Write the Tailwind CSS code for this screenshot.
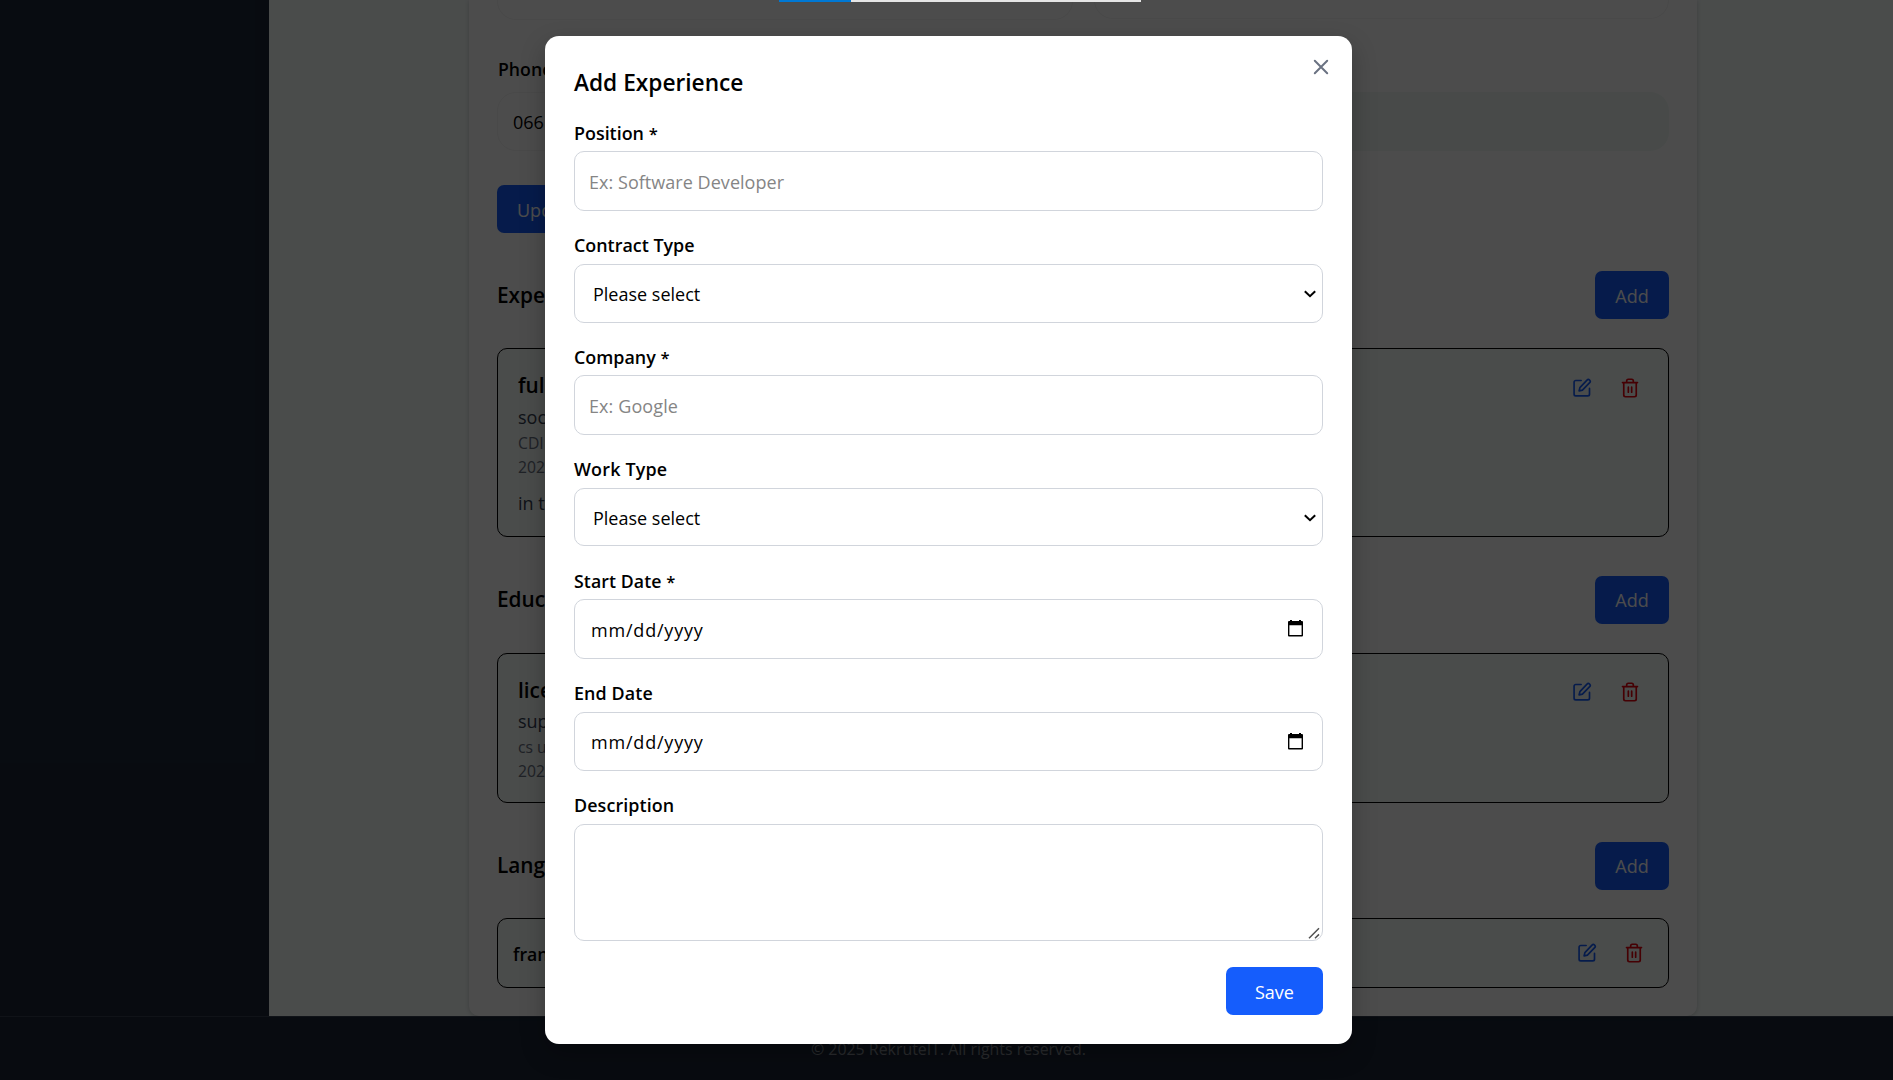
<!DOCTYPE html>
<html lang="en">
<head>
<meta charset="utf-8">
<title>Add Experience</title>
<script src="https://cdn.jsdelivr.net/npm/@tailwindcss/browser@4"></script>
</head>
<body class="h-[1080px] w-[1893px] overflow-hidden bg-white font-['Open_Sans','Noto_Sans',sans-serif] text-[18px] text-black">
<svg class="hidden">
  <symbol id="edit" viewBox="0 0 24 24" fill="none" stroke="currentColor" stroke-width="2" stroke-linecap="round" stroke-linejoin="round">
    <path d="M11 3H4.500a2 2 0 0 0-2 2v14.500a2 2 0 0 0 2 2H19a2 2 0 0 0 2-2v-7"/><path d="M18 2.600a2.121 2.121 0 0 1 3.200 3L12.500 14.500l-4 1 1-4z"/>
  </symbol>
  <symbol id="trash" viewBox="0 0 24 24" fill="none" stroke="currentColor" stroke-width="2" stroke-linecap="round" stroke-linejoin="round">
    <path d="M3 5.500h18M19.500 5.500V20.500a2 2 0 0 1-2 2h-11a2 2 0 0 1-2-2V5.500M8 5.500V3.500a2 2 0 0 1 2-2h4a2 2 0 0 1 2 2v2M10 11v6M14 11v6"/>
  </symbol>
  <symbol id="chev" viewBox="0 0 12 8" fill="none" stroke="currentColor" stroke-width="2"><path d="M.8 1.2 6 6.2l5.2-5"/></symbol>
  <symbol id="cal" viewBox="0 0 15 17"><path fill="currentColor" fill-rule="evenodd" d="M2 0h2v1h7V0h2v1h1a1 1 0 0 1 1 1v13.500a1 1 0 0 1-1 1H1a1 1 0 0 1-1-1V2a1 1 0 0 1 1-1h1zM1.400 5.300v9.700h12.200V5.300z"/></symbol>
</svg>

<!-- Page -->
<div class="flex h-[1016px]">
  <aside class="w-[269px] shrink-0 bg-[#1b2738]"></aside>
  <main class="flex-1 bg-[#f7fdfb] pl-[200px]">
    <section class="flex h-full w-[1228px] flex-col rounded-b-[10px] bg-white px-[28px] shadow-[0_1px_4px_rgba(0,0,0,0.18)]">
      <div class="flex h-[20px] gap-[21px]">
        <div class="h-[20px] w-[576px] rounded-b-[19px] border border-t-0 border-[#f3f3f3]"></div>
        <div class="h-[19px] w-[575px] rounded-b-[19px] border border-t-0 border-[#f3f3f3]"></div>
      </div>
      <div class="mt-[35px] h-[28px] pl-px text-[17.700px] leading-[28px] font-semibold">Phone</div>
      <div class="mt-[9px] flex h-[59px] gap-[21px]">
        <div class="w-[576px] rounded-[19px] border border-[#f3f3f3] pl-[15px] leading-[58px]">066</div>
        <div class="w-[575px] rounded-[19px] bg-[#f0f9f5]"></div>
      </div>
      <div class="mt-[34px] h-[48px] w-[100px] rounded-[7px] bg-[#155dfc] pl-[20px] leading-[50px] text-white">Update</div>

      <div class="mt-[38px] flex h-[48px] items-center justify-between">
        <h2 class="pt-px text-[20.800px] font-semibold">Exper</h2>
        <div class="h-[48px] w-[74px] rounded-[7px] bg-[#155dfc] text-center leading-[50px] text-white">Add</div>
      </div>
      <div class="mt-[29px] flex h-[189px] justify-between rounded-[10px] border border-black bg-[#f7fdfb] pt-[22px] pr-[28px] pl-[20px]">
        <div>
          <div class="h-[29px] text-[20.800px] leading-[29px] font-semibold">fulls</div>
          <div class="mt-[4px] h-[26px] leading-[26px] text-[#364153]">societe</div>
          <div class="mt-px h-[24px] text-[15.700px] leading-[24px] text-[#6a7282]">CDI</div>
          <div class="h-[24px] text-[15.700px] leading-[24px] text-[#6a7282]">2025</div>
          <div class="mt-[11px] h-[26px] leading-[26px] text-[#364153]">in the</div>
        </div>
        <div class="flex gap-[28px] pt-[7px]">
          <svg class="size-[20px] text-[#155dfc]"><use href="#edit"/></svg>
          <svg class="size-[20px] text-[#e7000b]"><use href="#trash"/></svg>
        </div>
      </div>

      <div class="mt-[39px] flex h-[48px] items-center justify-between">
        <h2 class="text-[20.800px] font-semibold">Education</h2>
        <div class="h-[48px] w-[74px] rounded-[7px] bg-[#155dfc] text-center leading-[49px] text-white">Add</div>
      </div>
      <div class="mt-[29px] flex h-[150px] justify-between rounded-[10px] border border-black bg-[#f7fdfb] pt-[21px] pr-[28px] pl-[20px]">
        <div>
          <div class="h-[29px] text-[20.800px] leading-[30px] font-semibold">licen</div>
          <div class="mt-[4px] h-[26px] leading-[26px] text-[#364153]">sup</div>
          <div class="mt-px h-[24px] text-[15.700px] leading-[24px] text-[#6a7282]">cs un</div>
          <div class="h-[24px] text-[15.700px] leading-[24px] text-[#6a7282]">2025</div>
        </div>
        <div class="flex gap-[28px] pt-[7px]">
          <svg class="size-[20px] text-[#155dfc]"><use href="#edit"/></svg>
          <svg class="size-[20px] text-[#e7000b]"><use href="#trash"/></svg>
        </div>
      </div>

      <div class="mt-[39px] flex h-[48px] items-center justify-between">
        <h2 class="text-[20.800px] font-semibold">Languages</h2>
        <div class="h-[48px] w-[74px] rounded-[7px] bg-[#155dfc] text-center leading-[49px] text-white">Add</div>
      </div>
      <div class="mt-[28px] flex h-[70px] items-center justify-between rounded-[10px] border border-black bg-[#f7fdfb] pr-[24px] pl-[15px]">
        <div class="pt-[2px] text-[17.700px] font-semibold">franc</div>
        <div class="flex gap-[27px]">
          <svg class="size-[20px] text-[#155dfc]"><use href="#edit"/></svg>
          <svg class="size-[20px] text-[#e7000b]"><use href="#trash"/></svg>
        </div>
      </div>
    </section>
  </main>
</div>
<footer class="h-[64px] border-t border-[#364153] bg-[#1b2738] pt-[20px] pl-[811px] text-[15.900px] leading-[24px] whitespace-nowrap text-[#8a8f96]">© 2025 RekruteIT. All rights reserved.</footer>

<!-- Overlay -->
<div class="absolute inset-0 bg-black/70 pt-[36px] pl-[545px]">
  <div class="relative h-[1008px] w-[807px] rounded-[14px] bg-white px-[29px] pt-[32px] shadow-[0_10px_24px_rgba(0,0,0,0.25)]">
    <svg class="absolute top-[23px] right-[23px] size-[16px] text-[#6a7282]" viewBox="0 0 16 16" fill="none" stroke="currentColor" stroke-width="2" stroke-linecap="round"><path d="M1.800 1.800l12.400 12.400M14.200 1.800L1.800 14.200"/></svg>
    <h1 class="h-[30px] text-[22.700px] leading-[30px] font-semibold">Add Experience</h1>
    <div class="mt-[21px] h-[112px]">
      <div class="h-[28px] text-[17.900px] leading-[28px] font-semibold">Position <span class="text-[16.500px]">*</span></div>
      <div class="mt-[4px] h-[60px] rounded-[10px] border border-[#d1d5dc] pl-[14px] leading-[61px] tracking-[0.04px] text-[#858585]">Ex: Software Developer</div>
    </div>
    <div class="h-[112px]">
      <div class="h-[28px] text-[17.900px] leading-[28px] font-semibold">Contract Type</div>
      <div class="mt-[5px] flex h-[59px] items-center justify-between rounded-[10px] border border-[#d1d5dc] pr-[6px] pl-[18px]"><span class="pt-[2px]">Please select</span><svg class="h-[8px] w-[12px]"><use href="#chev"/></svg></div>
    </div>
    <div class="h-[112px]">
      <div class="h-[28px] text-[17.900px] leading-[28px] font-semibold">Company <span class="text-[16.500px]">*</span></div>
      <div class="mt-[4px] h-[60px] rounded-[10px] border border-[#d1d5dc] pl-[14px] leading-[61px] tracking-[0.1px] text-[#858585]">Ex: Google</div>
    </div>
    <div class="h-[112px]">
      <div class="h-[28px] text-[17.900px] leading-[28px] font-semibold tracking-[0.2px]">Work Type</div>
      <div class="mt-[5px] flex h-[58px] items-center justify-between rounded-[10px] border border-[#d1d5dc] pr-[6px] pl-[18px]"><span class="pt-[2px]">Please select</span><svg class="mt-px h-[8px] w-[12px]"><use href="#chev"/></svg></div>
    </div>
    <div class="h-[112px]">
      <div class="h-[28px] text-[17.700px] leading-[28px] font-semibold tracking-[0.1px]">Start Date <span class="text-[16.500px]">*</span></div>
      <div class="mt-[4px] flex h-[60px] items-center justify-between rounded-[10px] border border-[#d1d5dc] pr-[19px] pl-[16px]"><span class="pt-[2px] tracking-[0.8px]">mm/dd/yyyy</span><svg class="mb-[2px] h-[17px] w-[15px]"><use href="#cal"/></svg></div>
    </div>
    <div class="h-[112px]">
      <div class="h-[28px] text-[17.900px] leading-[28px] font-semibold tracking-[0.1px]">End Date</div>
      <div class="mt-[5px] flex h-[59px] items-center justify-between rounded-[10px] border border-[#d1d5dc] pr-[19px] pl-[16px]"><span class="pt-[2px] tracking-[0.8px]">mm/dd/yyyy</span><svg class="h-[17px] w-[15px]"><use href="#cal"/></svg></div>
    </div>
    <div class="h-[150px]">
      <div class="h-[28px] text-[17.900px] leading-[28px] font-semibold tracking-[0.1px]">Description</div>
      <div class="mt-[5px] flex h-[117px] items-end justify-end rounded-[10px] border border-[#d1d5dc] pr-[2px] pb-px"><svg class="size-[12px]" viewBox="0 0 12 12" fill="none" stroke="#505050" stroke-width="1.500"><path d="M1 11.200L11 1.200M7 11.200L11 7.400"/></svg></div>
    </div>
    <div class="mt-[26px] flex justify-end">
      <div class="h-[48px] w-[97px] rounded-[7px] bg-[#155dfc] text-center leading-[50px] text-white">Save</div>
    </div>
  </div>
</div>

<!-- Progress strip -->
<div class="absolute top-0 left-[779px] flex h-[2px] w-[362px] bg-[#e5e5e5]"><div class="w-[72px] bg-[#0078d4]"></div></div>
</body>
</html>
